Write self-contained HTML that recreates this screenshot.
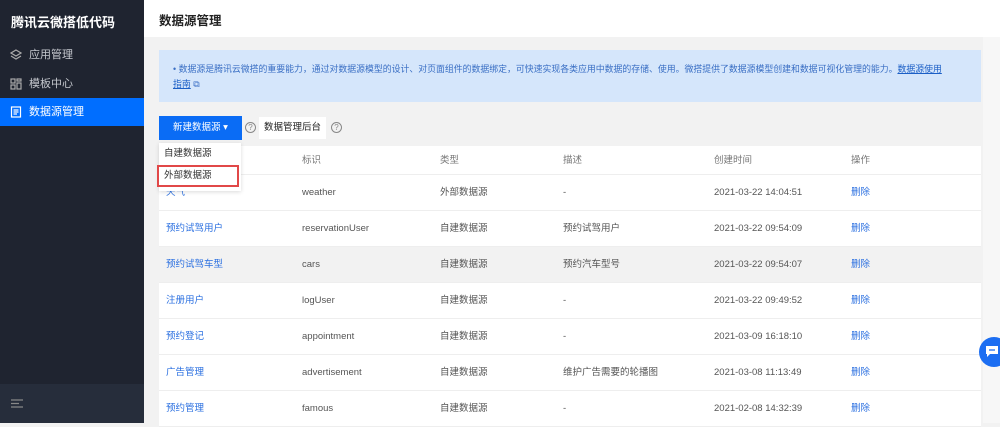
<!DOCTYPE html>
<html><head><meta charset="utf-8"><style>
*{margin:0;padding:0;box-sizing:border-box}
body{width:1000px;height:423px;overflow:hidden;font-family:"Liberation Sans","Noto Sans CJK SC",sans-serif;background:#f2f2f2;position:relative;font-size:9.5px;color:#555}
.side{position:absolute;left:0;top:0;width:144px;height:423px;background:#1f2430}
.side .bot{position:absolute;left:0;top:384px;width:144px;height:39px;background:#262d3b}
.logo{position:absolute;left:11px;top:12px;color:#fff;font-weight:bold;font-size:13px}
.mi{position:absolute;left:0;width:144px;height:28px;color:#c5c8ce;font-size:11px;line-height:28px;padding-left:29px}
.mi.act{background:#006eff;color:#fff}
.mi svg{position:absolute;left:10px;top:8px}
.hdr{position:absolute;left:144px;top:0;width:856px;height:37px;background:#fff;font-size:12.5px;font-weight:bold;color:#222;padding:10px 0 0 15px}
.note{position:absolute;left:159px;top:50px;width:822px;height:52px;background:#d5e6fb;color:#3a6fc4;font-size:8.9px;line-height:15px;padding:12px 0 0 14px}
.note u{color:#1b5fc6}
.btn{position:absolute;left:159px;top:116px;width:83px;height:24px;background:#0a6cf5;color:#fff;font-size:9.5px;text-align:center;line-height:24px}
.btn2{position:absolute;left:259px;top:117px;width:67px;height:22px;background:#fff;color:#222;font-size:9.5px;text-align:center;line-height:22px}
.q{position:absolute;top:122px;width:11px;height:11px;border:1px solid #888;border-radius:50%;font-size:8px;line-height:9px;text-align:center;color:#888}
.tbl{position:absolute;left:159px;top:146px;width:822px;background:#fff}
.row{position:relative;height:36px;border-bottom:1px solid #eee}
.row.h{height:29px;color:#777}
.row.g{background:#f2f2f2}
.row span{position:absolute;top:0;line-height:36px;white-space:nowrap}
.row.h span{line-height:29px}
.c1{left:7px;color:#2a6fe0}.h .c1{color:#777}
.c2{left:143px}.c3{left:281px}.c4{left:404px}.c5{left:555px}.c6{left:692px;color:#2a6fe0}.h .c6{color:#777}
.dd{position:absolute;left:159px;top:143px;width:82px;height:48px;background:#fff;box-shadow:0 1px 4px rgba(0,0,0,.15);font-size:9.5px;color:#333}
.dd div{height:22px;line-height:22px;padding-left:5px}
.red{position:absolute;left:157px;top:165px;width:82px;height:22px;border:2px solid #e14848}
.scroll{position:absolute;left:983px;top:37px;width:17px;height:386px;background:#f7f7f7}
.chat{position:absolute;left:979px;top:337px;width:30px;height:30px;border-radius:50%;background:#1c6ef2}
</style></head><body>
<div class="side">
<div class="logo">腾讯云微搭低代码</div>
<div class="mi" style="top:41px"><svg width="12" height="12" viewBox="0 0 12 12" fill="none" stroke="#aaa" stroke-width="1.2"><path d="M6 1L11 4L6 7L1 4Z"/><path d="M1 7L6 10L11 7"/></svg>应用管理</div>
<div class="mi" style="top:70px"><svg width="12" height="12" viewBox="0 0 12 12" fill="none" stroke="#aaa" stroke-width="1.2"><rect x="1" y="1" width="4" height="4"/><rect x="7" y="1" width="4" height="2"/><rect x="1" y="7" width="4" height="4"/><rect x="7" y="5" width="4" height="6"/></svg>模板中心</div>
<div class="mi act" style="top:98px"><svg width="12" height="12" viewBox="0 0 12 12" fill="none" stroke="#fff" stroke-width="1.2"><rect x="1.5" y="1" width="9" height="10"/><path d="M3.5 4H8.5M3.5 6H8.5M3.5 8H7"/></svg>数据源管理</div>
<div class="bot"><svg style="position:absolute;left:11px;top:15px" width="12" height="9" viewBox="0 0 12 9" stroke="#888" stroke-width="1.3"><path d="M0 1H12M0 4.5H8M0 8H12"/></svg></div>
</div>
<div class="hdr">数据源管理</div>
<div class="note">• 数据源是腾讯云微搭的重要能力，通过对数据源模型的设计、对页面组件的数据绑定，可快速实现各类应用中数据的存储、使用。微搭提供了数据源模型创建和数据可视化管理的能力。<u>数据源使用<br>指南</u> ⧉</div>
<div class="btn">新建数据源 ▾</div>
<div class="q" style="left:245px">?</div>
<div class="btn2">数据管理后台</div>
<div class="q" style="left:331px">?</div>
<div class="tbl">
<div class="row h"><span class="c1">名称</span><span class="c2">标识</span><span class="c3">类型</span><span class="c4">描述</span><span class="c5">创建时间</span><span class="c6">操作</span></div>
<div class="row"><span class="c1">天气</span><span class="c2">weather</span><span class="c3">外部数据源</span><span class="c4">-</span><span class="c5">2021-03-22 14:04:51</span><span class="c6">删除</span></div>
<div class="row"><span class="c1">预约试驾用户</span><span class="c2">reservationUser</span><span class="c3">自建数据源</span><span class="c4">预约试驾用户</span><span class="c5">2021-03-22 09:54:09</span><span class="c6">删除</span></div>
<div class="row g"><span class="c1">预约试驾车型</span><span class="c2">cars</span><span class="c3">自建数据源</span><span class="c4">预约汽车型号</span><span class="c5">2021-03-22 09:54:07</span><span class="c6">删除</span></div>
<div class="row"><span class="c1">注册用户</span><span class="c2">logUser</span><span class="c3">自建数据源</span><span class="c4">-</span><span class="c5">2021-03-22 09:49:52</span><span class="c6">删除</span></div>
<div class="row"><span class="c1">预约登记</span><span class="c2">appointment</span><span class="c3">自建数据源</span><span class="c4">-</span><span class="c5">2021-03-09 16:18:10</span><span class="c6">删除</span></div>
<div class="row"><span class="c1">广告管理</span><span class="c2">advertisement</span><span class="c3">自建数据源</span><span class="c4">维护广告需要的轮播图</span><span class="c5">2021-03-08 11:13:49</span><span class="c6">删除</span></div>
<div class="row"><span class="c1">预约管理</span><span class="c2">famous</span><span class="c3">自建数据源</span><span class="c4">-</span><span class="c5">2021-02-08 14:32:39</span><span class="c6">删除</span></div>
</div>
<div class="dd"><div>自建数据源</div><div>外部数据源</div></div>
<div class="red"></div>
<div class="scroll"></div>
<div class="chat"><svg style="position:absolute;left:6px;top:8px" width="14" height="13" viewBox="0 0 14 13"><path d="M1 1H13V9H5L2 12V9H1Z" fill="#fff"/><path d="M4 5H10" stroke="#1c6ef2" stroke-width="1.3"/></svg></div>
</body></html>
